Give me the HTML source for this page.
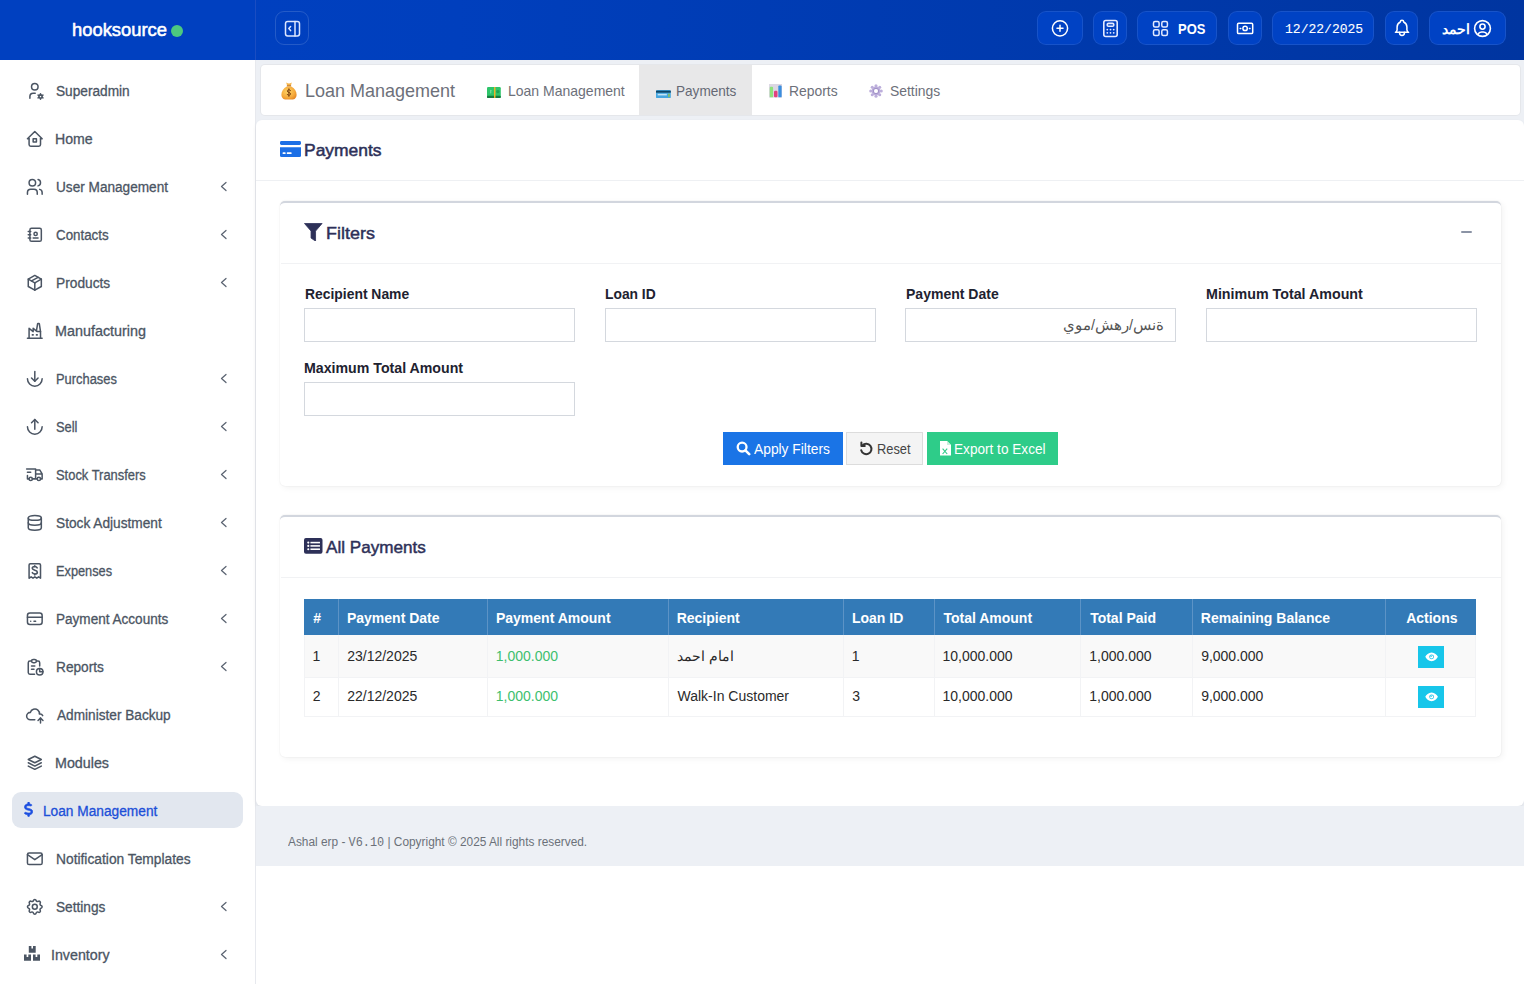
<!DOCTYPE html>
<html><head><meta charset="utf-8"><style>
*{box-sizing:border-box;margin:0;padding:0}
html,body{width:1524px;height:984px;overflow:hidden;background:#fff;font-family:"Liberation Sans",sans-serif}
svg{display:block;position:absolute}
.t{position:absolute;white-space:nowrap;line-height:1;transform-origin:0 0}
.r{position:absolute}
.hb{position:absolute;top:11px;height:34px;border-radius:9px;background:#0042c4;border:1px solid rgba(255,255,255,0.09)}
</style></head><body>
<div class="r" style="left:256px;top:60px;width:1268px;height:806px;background:#edf0f5"></div>
<div class="r" style="left:0;top:0;width:1524px;height:60px;background:linear-gradient(90deg,#0041c2 0%,#003fbd 30%,#003cb4 50%,#0035a0 100%)"></div>
<div class="r" style="left:0;top:0;width:255px;height:60px;background:#0040c0"></div>
<div class="r" style="left:255px;top:0;width:1px;height:60px;background:#1a4dc2"></div>
<div class="t" style="left:72.20px;top:21.25px;font-size:18.6px;color:#fff;-webkit-text-stroke:0.55px #fff;transform:scaleX(0.9873);">hooksource</div>
<div class="r" style="left:171px;top:24.8px;width:12px;height:12px;border-radius:50%;background:#4cc97f"></div>
<div class="hb" style="left:275px;width:34px;background:transparent;border-color:rgba(255,255,255,0.14)"></div>
<svg style="left:284px;top:20px" width="17" height="17" viewBox="0 0 17 17" fill="none" stroke="#dde6ff" stroke-width="1.5" stroke-linecap="round" stroke-linejoin="round"><rect x="1.5" y="1.5" width="14" height="14.5" rx="2.2"/><path d="M11 1.5v14.5"/><path d="M6.6 6.6L4.8 8.6l1.8 2"/></svg>
<div class="hb" style="left:1037px;width:46px"></div>
<svg style="left:1051px;top:19px" width="18" height="18" viewBox="0 0 18 18" fill="none" stroke="#fff" stroke-width="1.5" stroke-linecap="round"><circle cx="9" cy="9.3" r="7.6"/><path d="M9 6.3v6M6 9.3h6"/></svg>
<div class="hb" style="left:1093px;width:34px"></div>
<svg style="left:1102px;top:19px" width="17" height="19" viewBox="0 0 17 19" fill="none" stroke="#e3eaff" stroke-width="1.6" stroke-linecap="round"><rect x="1.8" y="1.5" width="13.4" height="16" rx="2"/><rect x="5.2" y="4.4" width="6.6" height="2.8" rx="1.3"/><path d="M5.3 10.6h.01M8.5 10.6h.01M11.7 10.6h.01M5.3 13.8h.01M8.5 13.8h.01M11.7 13.8h.01" stroke-width="1.8"/></svg>
<div class="hb" style="left:1137px;width:80px"></div>
<svg style="left:1152px;top:20px" width="17" height="17" viewBox="0 0 17 17" fill="none" stroke="#e3eaff" stroke-width="1.5"><rect x="1.5" y="1.5" width="5.6" height="5.6" rx="1.5"/><rect x="9.8" y="1.5" width="5.6" height="5.6" rx="1.5"/><rect x="1.5" y="9.8" width="5.6" height="5.6" rx="1.5"/><rect x="9.8" y="9.8" width="5.6" height="5.6" rx="1.5"/></svg>
<div class="t" style="left:1178.13px;top:21.72px;font-size:14.5px;color:#fff;font-weight:bold;transform:scaleX(0.8939);">POS</div>
<div class="hb" style="left:1228px;width:34px"></div>
<svg style="left:1236px;top:22px" width="18" height="13" viewBox="0 0 18 13" fill="none" stroke="#fff" stroke-width="1.5" stroke-linecap="round"><rect x="1.5" y="1.2" width="15.2" height="10.4" rx="1.2"/><circle cx="9.1" cy="6.4" r="2.2"/><path d="M4.2 6.4h.6M13.4 6.4h.6"/></svg>
<div class="hb" style="left:1272px;width:102px"></div>
<div class="t" style="left:1284.61px;top:22.55px;font-size:13.5px;color:#fff;-webkit-text-stroke:0.1px #fff;font-family:'Liberation Mono',monospace;transform:scaleX(0.9649);">12/22/2025</div>
<div class="hb" style="left:1385px;width:33px"></div>
<svg style="left:1393px;top:19px" width="18" height="19" viewBox="0 0 18 19" fill="none" stroke="#fff" stroke-width="1.5" stroke-linecap="round" stroke-linejoin="round"><path d="M7.3 3a1.7 1.7 0 0 1 3.4 0a5.6 5.6 0 0 1 3.2 4.9v2.9a3.2 3.2 0 0 0 1.7 2.5h-13.2a3.2 3.2 0 0 0 1.7 -2.5v-2.9a5.6 5.6 0 0 1 3.2 -4.9"/><path d="M6.6 13.3v.7a2.4 2.4 0 0 0 4.8 0v-.7"/></svg>
<div class="hb" style="left:1429px;width:77px"></div>
<div class="t" style="left:1442px;top:21.5px;font-size:13.5px;line-height:16px;color:#fff;font-weight:bold">احمد</div>
<svg style="left:1473px;top:19px" width="19" height="19" viewBox="0 0 19 19" fill="none" stroke="#fff" stroke-width="1.6" stroke-linecap="round"><circle cx="9.5" cy="9.5" r="7.9"/><circle cx="9.5" cy="7.6" r="2.6"/><path d="M4.9 15.4a4.3 4.3 0 0 1 3.7 -2.4h1.8a4.3 4.3 0 0 1 3.7 2.4"/></svg>
<div class="r" style="left:0;top:60px;width:256px;height:924px;background:#fff"></div>
<div class="r" style="left:255px;top:60px;width:1px;height:924px;background:#e7e9ee"></div>
<svg style="left:25.2px;top:81.1px" width="19.6" height="19.6" viewBox="0 0 24 24" fill="none" stroke="#4b5563" stroke-width="1.85" stroke-linecap="round" stroke-linejoin="round"><path d="M8 7a4 4 0 1 0 8 0a4 4 0 0 0 -8 0"/><path d="M6 21v-2a4 4 0 0 1 4 -4h2.5"/><path d="M17.001 19a2 2 0 1 0 4 0a2 2 0 1 0 -4 0"/><path d="M19.001 15.5v1.5"/><path d="M19.001 21v1.5"/><path d="M22.032 17.25l-1.299 .75"/><path d="M17.27 20l-1.3 .75"/><path d="M15.97 17.25l1.3 .75"/><path d="M20.733 20l1.3 .75"/></svg>
<div class="t" style="left:56.03px;top:83.94px;font-size:14px;color:#4b5563;-webkit-text-stroke:0.3px #4b5563;transform:scaleX(0.9764);">Superadmin</div>
<svg style="left:25.2px;top:129.1px" width="19.6" height="19.6" viewBox="0 0 24 24" fill="none" stroke="#4b5563" stroke-width="1.85" stroke-linecap="round" stroke-linejoin="round"><path d="M5 12l-2 0l9 -9l9 9l-2 0"/><path d="M5 12v7a2 2 0 0 0 2 2h10a2 2 0 0 0 2 -2v-7"/><path d="M10 12h4v4h-4z"/></svg>
<div class="t" style="left:55.49px;top:131.94px;font-size:14px;color:#4b5563;-webkit-text-stroke:0.3px #4b5563;transform:scaleX(1.0092);">Home</div>
<svg style="left:25.2px;top:177.1px" width="19.6" height="19.6" viewBox="0 0 24 24" fill="none" stroke="#4b5563" stroke-width="1.85" stroke-linecap="round" stroke-linejoin="round"><path d="M5 7a4 4 0 1 0 8 0a4 4 0 1 0 -8 0"/><path d="M3 21v-2a4 4 0 0 1 4 -4h4a4 4 0 0 1 4 4v2"/><path d="M16 3.13a4 4 0 0 1 0 7.75"/><path d="M21 21v-2a4 4 0 0 0 -3 -3.85"/></svg>
<div class="t" style="left:55.60px;top:179.94px;font-size:14px;color:#4b5563;-webkit-text-stroke:0.3px #4b5563;transform:scaleX(0.9730);">User Management</div>
<svg style="left:220px;top:180.8px" width="8" height="11" viewBox="0 0 8 11" fill="none" stroke="#5b6472" stroke-width="1.25" stroke-linecap="round" stroke-linejoin="round"><path d="M6 1.5L1.5 5.5L6 9.5"/></svg>
<svg style="left:25.2px;top:225.1px" width="19.6" height="19.6" viewBox="0 0 24 24" fill="none" stroke="#4b5563" stroke-width="1.85" stroke-linecap="round" stroke-linejoin="round"><path d="M20 6v12a2 2 0 0 1 -2 2h-10a2 2 0 0 1 -2 -2v-12a2 2 0 0 1 2 -2h10a2 2 0 0 1 2 2z"/><path d="M10 16h6"/><path d="M11 11a2 2 0 1 0 4 0a2 2 0 1 0 -4 0"/><path d="M4 8h3"/><path d="M4 12h3"/><path d="M4 16h3"/></svg>
<div class="t" style="left:55.97px;top:227.94px;font-size:14px;color:#4b5563;-webkit-text-stroke:0.3px #4b5563;transform:scaleX(0.9532);">Contacts</div>
<svg style="left:220px;top:228.8px" width="8" height="11" viewBox="0 0 8 11" fill="none" stroke="#5b6472" stroke-width="1.25" stroke-linecap="round" stroke-linejoin="round"><path d="M6 1.5L1.5 5.5L6 9.5"/></svg>
<svg style="left:25.2px;top:273.1px" width="19.6" height="19.6" viewBox="0 0 24 24" fill="none" stroke="#4b5563" stroke-width="1.85" stroke-linecap="round" stroke-linejoin="round"><path d="M12 3l8 4.5l0 9l-8 4.5l-8 -4.5l0 -9l8 -4.5"/><path d="M12 12l8 -4.5"/><path d="M12 12l0 9"/><path d="M12 12l-8 -4.5"/><path d="M16 5.25l-8 4.5"/></svg>
<div class="t" style="left:55.52px;top:275.94px;font-size:14px;color:#4b5563;-webkit-text-stroke:0.3px #4b5563;transform:scaleX(0.9815);">Products</div>
<svg style="left:220px;top:276.8px" width="8" height="11" viewBox="0 0 8 11" fill="none" stroke="#5b6472" stroke-width="1.25" stroke-linecap="round" stroke-linejoin="round"><path d="M6 1.5L1.5 5.5L6 9.5"/></svg>
<svg style="left:25.2px;top:321.1px" width="19.6" height="19.6" viewBox="0 0 24 24" fill="none" stroke="#4b5563" stroke-width="1.85" stroke-linecap="round" stroke-linejoin="round"><path d="M3 21h18"/><path d="M5 21v-12l5 4v-4l5 4h4"/><path d="M19 21v-8l-1.436 -9.574a.5 .5 0 0 0 -.495 -.426h-1.145a.5 .5 0 0 0 -.494 .418l-1.43 8.582"/><path d="M9 17h1"/><path d="M14 17h1"/></svg>
<div class="t" style="left:55.47px;top:323.94px;font-size:14px;color:#4b5563;-webkit-text-stroke:0.3px #4b5563;transform:scaleX(1.0258);">Manufacturing</div>
<svg style="left:25.2px;top:369.1px" width="19.6" height="19.6" viewBox="0 0 24 24" fill="none" stroke="#4b5563" stroke-width="1.85" stroke-linecap="round" stroke-linejoin="round"><path d="M12 3v12"/><path d="M16 11l-4 4l-4 -4"/><path d="M3 12a9 9 0 0 0 18 0"/></svg>
<div class="t" style="left:55.59px;top:371.94px;font-size:14px;color:#4b5563;-webkit-text-stroke:0.3px #4b5563;transform:scaleX(0.9211);">Purchases</div>
<svg style="left:220px;top:372.8px" width="8" height="11" viewBox="0 0 8 11" fill="none" stroke="#5b6472" stroke-width="1.25" stroke-linecap="round" stroke-linejoin="round"><path d="M6 1.5L1.5 5.5L6 9.5"/></svg>
<svg style="left:25.2px;top:417.1px" width="19.6" height="19.6" viewBox="0 0 24 24" fill="none" stroke="#4b5563" stroke-width="1.85" stroke-linecap="round" stroke-linejoin="round"><path d="M12 15v-12"/><path d="M16 7l-4 -4l-4 4"/><path d="M3 12a9 9 0 0 0 18 0"/></svg>
<div class="t" style="left:56.07px;top:419.94px;font-size:14px;color:#4b5563;-webkit-text-stroke:0.3px #4b5563;transform:scaleX(0.9186);">Sell</div>
<svg style="left:220px;top:420.8px" width="8" height="11" viewBox="0 0 8 11" fill="none" stroke="#5b6472" stroke-width="1.25" stroke-linecap="round" stroke-linejoin="round"><path d="M6 1.5L1.5 5.5L6 9.5"/></svg>
<svg style="left:25.2px;top:465.1px" width="19.6" height="19.6" viewBox="0 0 24 24" fill="none" stroke="#4b5563" stroke-width="1.85" stroke-linecap="round" stroke-linejoin="round"><path d="M5 17a2 2 0 1 0 4 0a2 2 0 1 0 -4 0"/><path d="M15 17a2 2 0 1 0 4 0a2 2 0 1 0 -4 0"/><path d="M5 17h-2v-4m-1 -8h11v12m-4 0h6m4 0h2v-6h-8m0 -5h5l3 5"/><path d="M3 9l4 0"/></svg>
<div class="t" style="left:56.06px;top:467.94px;font-size:14px;color:#4b5563;-webkit-text-stroke:0.3px #4b5563;transform:scaleX(0.9227);">Stock Transfers</div>
<svg style="left:220px;top:468.8px" width="8" height="11" viewBox="0 0 8 11" fill="none" stroke="#5b6472" stroke-width="1.25" stroke-linecap="round" stroke-linejoin="round"><path d="M6 1.5L1.5 5.5L6 9.5"/></svg>
<svg style="left:25.2px;top:513.1px" width="19.6" height="19.6" viewBox="0 0 24 24" fill="none" stroke="#4b5563" stroke-width="1.85" stroke-linecap="round" stroke-linejoin="round"><path d="M4 6a8 3 0 1 0 16 0a8 3 0 1 0 -16 0"/><path d="M4 6v6a8 3 0 0 0 16 0v-6"/><path d="M4 12v6a8 3 0 0 0 16 0v-6"/></svg>
<div class="t" style="left:56.03px;top:515.94px;font-size:14px;color:#4b5563;-webkit-text-stroke:0.3px #4b5563;transform:scaleX(0.9778);">Stock Adjustment</div>
<svg style="left:220px;top:516.8px" width="8" height="11" viewBox="0 0 8 11" fill="none" stroke="#5b6472" stroke-width="1.25" stroke-linecap="round" stroke-linejoin="round"><path d="M6 1.5L1.5 5.5L6 9.5"/></svg>
<svg style="left:25.2px;top:561.1px" width="19.6" height="19.6" viewBox="0 0 24 24" fill="none" stroke="#4b5563" stroke-width="1.85" stroke-linecap="round" stroke-linejoin="round"><path d="M5 21v-16a1.5 1.5 0 0 1 1.5 -1.5h11a1.5 1.5 0 0 1 1.5 1.5v16l-2.3 -1.6l-2.3 1.6l-2.3 -1.6l-2.3 1.6l-2.3 -1.6l-2.3 1.6"/><path d="M14.9 8.4c-.5 -1 -1.6 -1.6 -2.9 -1.6c-1.8 0 -3.1 .9 -3.1 2.2c0 3 6.2 1.7 6.2 4.7c0 1.3 -1.4 2.2 -3.1 2.2c-1.4 0 -2.5 -.6 -3 -1.6" stroke-width="2"/><path d="M12 5.8v1.2M12 15.9v1.2" stroke-width="1.8"/></svg>
<div class="t" style="left:55.60px;top:563.94px;font-size:14px;color:#4b5563;-webkit-text-stroke:0.3px #4b5563;transform:scaleX(0.9126);">Expenses</div>
<svg style="left:220px;top:564.8px" width="8" height="11" viewBox="0 0 8 11" fill="none" stroke="#5b6472" stroke-width="1.25" stroke-linecap="round" stroke-linejoin="round"><path d="M6 1.5L1.5 5.5L6 9.5"/></svg>
<svg style="left:25.2px;top:609.1px" width="19.6" height="19.6" viewBox="0 0 24 24" fill="none" stroke="#4b5563" stroke-width="1.85" stroke-linecap="round" stroke-linejoin="round"><path d="M3 8a3 3 0 0 1 3 -3h12a3 3 0 0 1 3 3v8a3 3 0 0 1 -3 3h-12a3 3 0 0 1 -3 -3z"/><path d="M3 10l18 0"/><path d="M7 15l.01 0"/><path d="M11 15l2 0"/></svg>
<div class="t" style="left:55.54px;top:611.94px;font-size:14px;color:#4b5563;-webkit-text-stroke:0.3px #4b5563;transform:scaleX(0.9681);">Payment Accounts</div>
<svg style="left:220px;top:612.8px" width="8" height="11" viewBox="0 0 8 11" fill="none" stroke="#5b6472" stroke-width="1.25" stroke-linecap="round" stroke-linejoin="round"><path d="M6 1.5L1.5 5.5L6 9.5"/></svg>
<svg style="left:25.2px;top:657.1px" width="19.6" height="19.6" viewBox="0 0 24 24" fill="none" stroke="#4b5563" stroke-width="1.85" stroke-linecap="round" stroke-linejoin="round"><path d="M8 5h-2a2 2 0 0 0 -2 2v12a2 2 0 0 0 2 2h5.697"/><path d="M18 14v4h4"/><path d="M18 11v-4a2 2 0 0 0 -2 -2h-2"/><path d="M8 5a2 2 0 0 1 2 -2h2a2 2 0 0 1 2 2v0a2 2 0 0 1 -2 2h-2a2 2 0 0 1 -2 -2z"/><path d="M14 18a4 4 0 1 0 8 0a4 4 0 1 0 -8 0"/><path d="M8 11h4"/><path d="M8 15h3"/></svg>
<div class="t" style="left:55.53px;top:659.94px;font-size:14px;color:#4b5563;-webkit-text-stroke:0.3px #4b5563;transform:scaleX(0.9775);">Reports</div>
<svg style="left:220px;top:660.8px" width="8" height="11" viewBox="0 0 8 11" fill="none" stroke="#5b6472" stroke-width="1.25" stroke-linecap="round" stroke-linejoin="round"><path d="M6 1.5L1.5 5.5L6 9.5"/></svg>
<svg style="left:25.2px;top:705.1px" width="19.6" height="19.6" viewBox="0 0 24 24" fill="none" stroke="#4b5563" stroke-width="1.85" stroke-linecap="round" stroke-linejoin="round"><path d="M12 18.004h-5.343c-2.572 -.004 -4.657 -2.011 -4.657 -4.487c0 -2.475 2.085 -4.482 4.657 -4.482c.393 -1.762 1.794 -3.2 3.675 -3.773c1.88 -.572 3.956 -.193 5.444 1c1.488 1.19 2.162 3.007 1.77 4.769h.99c1.38 0 2.57 .811 3.128 1.986"/><path d="M19 22v-6"/><path d="M22 19l-3 -3l-3 3"/></svg>
<div class="t" style="left:56.62px;top:707.94px;font-size:14px;color:#4b5563;-webkit-text-stroke:0.3px #4b5563;transform:scaleX(0.9741);">Administer Backup</div>
<svg style="left:25.2px;top:753.1px" width="19.6" height="19.6" viewBox="0 0 24 24" fill="none" stroke="#4b5563" stroke-width="1.85" stroke-linecap="round" stroke-linejoin="round"><path d="M12 4l-8 4l8 4l8 -4l-8 -4"/><path d="M4 12l8 4l8 -4"/><path d="M4 16l8 4l8 -4"/></svg>
<div class="t" style="left:55.48px;top:755.94px;font-size:14px;color:#4b5563;-webkit-text-stroke:0.3px #4b5563;transform:scaleX(1.0202);">Modules</div>
<div class="r" style="left:12px;top:792px;width:231px;height:36px;background:#e2e7ef;border-radius:9px"></div>
<svg style="left:23.8px;top:802px" width="9.2" height="14.7" viewBox="0 0 320 512"><path fill="#1c4fe0" stroke="#1c4fe0" stroke-width="22" d="M160 0c17.7 0 32 14.3 32 32v35.7c1.6 .2 3.1 .4 4.7 .7c.4 .1 .7 .1 1.1 .2l48 8.8c17.4 3.2 28.9 19.9 25.7 37.2s-19.9 28.9-37.2 25.7l-47.5-8.7c-31.3-4.6-58.9-1.5-78.3 6.2s-27.2 18.3-29 28.1c-2 10.7-.5 16.7 1.2 20.4c1.8 3.9 5.5 8.3 12.8 13.2c16.3 10.7 41.3 17.7 73.7 26.3l2.9 .8c28.6 7.6 63.6 16.8 89.6 33.8c14.2 9.300 27.6 21.9 35.9 39.5c8.5 17.9 10.3 37.9 6.4 59.2c-6.9 38-33.1 63.4-65.6 76.7c-13.7 5.6-28.600 9.2-44.4 11V480c0 17.7-14.3 32-32 32s-32-14.3-32-32V445.1c-.4-.1-.9-.1-1.3-.2l-.2 0 0 0c-24.4-3.8-64.5-14.3-91.5-26.3c-16.1-7.2-23.4-26.1-16.2-42.2s26.1-23.4 42.2-16.2c20.9 9.3 55.3 18.5 75.2 21.6c31.9 4.7 58.2 2 76-5.3c16.9-6.9 24.6-16.9 26.8-28.9c1.9-10.6 .4-16.7-1.3-20.4c-1.9-4-5.6-8.4-13-13.3c-16.4-10.7-41.5-17.7-74-26.3l-2.8-.7 0 0C119.4 279.3 84.4 270 58.4 253c-14.2-9.3-27.5-22-35.8-39.600c-8.4-17.9-10.1-37.9-6.1-59.2C23.7 116 52.3 91.2 84.8 78.3c13.3-5.3 27.9-8.9 43.2-11V32c0-17.7 14.3-32 32-32z"/></svg>
<div class="t" style="left:43.13px;top:803.94px;font-size:14px;color:#1c4fd8;-webkit-text-stroke:0.3px #1c4fd8;transform:scaleX(0.9792);">Loan Management</div>
<svg style="left:25.2px;top:849.1px" width="19.6" height="19.6" viewBox="0 0 24 24" fill="none" stroke="#4b5563" stroke-width="1.85" stroke-linecap="round" stroke-linejoin="round"><path d="M3 7a2 2 0 0 1 2 -2h14a2 2 0 0 1 2 2v10a2 2 0 0 1 -2 2h-14a2 2 0 0 1 -2 -2v-10z"/><path d="M3 7l9 6l9 -6"/></svg>
<div class="t" style="left:55.52px;top:851.94px;font-size:14px;color:#4b5563;-webkit-text-stroke:0.3px #4b5563;transform:scaleX(0.9850);">Notification Templates</div>
<svg style="left:25.2px;top:897.1px" width="19.6" height="19.6" viewBox="0 0 24 24" fill="none" stroke="#4b5563" stroke-width="1.85" stroke-linecap="round" stroke-linejoin="round"><path d="M10.325 4.317c.426 -1.756 2.924 -1.756 3.35 0a1.724 1.724 0 0 0 2.573 1.066c1.543 -.94 3.31 .826 2.37 2.37a1.724 1.724 0 0 0 1.065 2.572c1.756 .426 1.756 2.924 0 3.35a1.724 1.724 0 0 0 -1.066 2.573c.94 1.543 -.826 3.31 -2.37 2.37a1.724 1.724 0 0 0 -2.572 1.065c-.426 1.756 -2.924 1.756 -3.35 0a1.724 1.724 0 0 0 -2.573 -1.066c-1.543 .94 -3.31 -.826 -2.37 -2.37a1.724 1.724 0 0 0 -1.065 -2.572c-1.756 -.426 -1.756 -2.924 0 -3.35a1.724 1.724 0 0 0 1.066 -2.573c-.94 -1.543 .826 -3.31 2.37 -2.37c1 .608 2.296 .07 2.572 -1.065z"/><path d="M9 12a3 3 0 1 0 6 0a3 3 0 0 0 -6 0"/></svg>
<div class="t" style="left:56.03px;top:899.94px;font-size:14px;color:#4b5563;-webkit-text-stroke:0.3px #4b5563;transform:scaleX(0.9769);">Settings</div>
<svg style="left:220px;top:900.8px" width="8" height="11" viewBox="0 0 8 11" fill="none" stroke="#5b6472" stroke-width="1.25" stroke-linecap="round" stroke-linejoin="round"><path d="M6 1.5L1.5 5.5L6 9.5"/></svg>
<svg style="left:24px;top:946px" width="16" height="15" viewBox="0 0 16 15"><path fill="#4b5563" d="M4.8 0h2.6v2.6h1.6V0h2.7v6.8H4.8z"/><path fill="#4b5563" d="M0 8.5h2.6v2.5h1.7V8.5h2.7v6.3H0z"/><path fill="#4b5563" d="M9 8.5h2.6v2.5h1.7V8.5h2.7v6.3H9z"/></svg>
<div class="t" style="left:50.94px;top:947.94px;font-size:14px;color:#4b5563;-webkit-text-stroke:0.3px #4b5563;transform:scaleX(1.0166);">Inventory</div>
<svg style="left:220px;top:948.8px" width="8" height="11" viewBox="0 0 8 11" fill="none" stroke="#5b6472" stroke-width="1.25" stroke-linecap="round" stroke-linejoin="round"><path d="M6 1.5L1.5 5.5L6 9.5"/></svg>
<div class="r" style="left:261px;top:65px;width:1259px;height:50px;background:#fff;border-radius:4px;box-shadow:0 0 0 1px #e5e7eb"></div>
<div class="r" style="left:639px;top:65px;width:112.5px;height:50px;background:#e8e8e9"></div>
<svg style="left:280.5px;top:81.5px" width="16" height="18" viewBox="0 0 16 18"><defs><radialGradient id="bag" cx="0.42" cy="0.4" r="0.75"><stop offset="0" stop-color="#ffd466"/><stop offset="0.6" stop-color="#f5a93a"/><stop offset="1" stop-color="#e07b1c"/></radialGradient></defs><path d="M5.2 0.6c1 .5 1.8 .9 2.8 .9s1.8-.4 2.8-.9l-0.9 3h-3.8z" fill="#f6b346"/><path d="M5.9 3.3h4.2v1.2h-4.2z" fill="#b86a18"/><path d="M5.8 4.4c-3.4 1.7-5.4 5-5.4 8.3c0 3 2.1 4.9 4.6 4.9h6c2.5 0 4.6-1.9 4.6-4.9c0-3.3-2-6.6-5.4-8.3z" fill="url(#bag)"/><path d="M9.6 8.6c-.4-.5-1-.8-1.7-.8c-.9 0-1.6 .5-1.6 1.3c0 1.7 3.3 1.1 3.3 2.8c0 .8-.7 1.3-1.7 1.3c-.8 0-1.5-.4-1.8-.9M7.9 6.8v7.6" fill="none" stroke="#7a3e0c" stroke-width="1" stroke-linecap="round"/></svg>
<div class="t" style="left:305.02px;top:81.83px;font-size:18.5px;color:#6d707a;transform:scaleX(0.9723);">Loan Management</div>
<svg style="left:487.4px;top:87px" width="13.8" height="11" viewBox="0 0 14 11"><rect x="0" y="0" width="14" height="11" rx="1.2" fill="#2ec56a"/><rect x="0" y="8.9" width="14" height="2.1" rx="0.8" fill="#167a3e"/><rect x="7.1" y="0" width="1.5" height="11" fill="#f0b328"/><circle cx="11" cy="4.6" r="1.7" fill="#1ea455"/><rect x="3.3" y="2.6" width="1" height="4" rx="0.5" fill="#7ee3a6"/></svg>
<div class="t" style="left:507.75px;top:83.72px;font-size:14.5px;color:#6d707a;transform:scaleX(0.9655);">Loan Management</div>
<svg style="left:656.2px;top:89.6px" width="14.8" height="8.4" viewBox="0 0 15 8.5"><rect x="0" y="0" width="15" height="8.5" rx="1.5" fill="#45a6e0"/><rect x="0" y="0.7" width="15" height="2" fill="#0e4566"/><rect x="1.7" y="3.9" width="9.3" height="1.6" fill="#c4e4f6"/><rect x="12.2" y="3.7" width="1.8" height="3.6" fill="#86c06a"/></svg>
<div class="t" style="left:676.29px;top:83.72px;font-size:14.5px;color:#656874;transform:scaleX(0.9369);">Payments</div>
<svg style="left:769.3px;top:84.2px" width="13.2" height="13.6" viewBox="0 0 13 13.5"><rect x="0" y="0" width="13" height="13.5" fill="#dcd7e3"/><rect x="0.7" y="2.8" width="3.3" height="10.4" rx="0.9" fill="#8ee27c"/><rect x="4.9" y="6.8" width="3.5" height="6.4" rx="1.2" fill="#e0407e"/><rect x="9.2" y="1.5" width="3.3" height="11.7" rx="0.9" fill="#3b8ede"/></svg>
<div class="t" style="left:788.86px;top:83.72px;font-size:14.5px;color:#6d707a;transform:scaleX(0.9581);">Reports</div>
<svg style="left:869.3px;top:83.8px" width="14" height="14" viewBox="0 0 24 24"><g fill="#bcaedb"><circle cx="12" cy="12" r="7.6"/><circle cx="12" cy="2.9" r="2.6"/><circle cx="12" cy="21.1" r="2.6"/><circle cx="2.9" cy="12" r="2.6"/><circle cx="21.1" cy="12" r="2.6"/><circle cx="5.6" cy="5.6" r="2.6"/><circle cx="18.4" cy="5.6" r="2.6"/><circle cx="5.6" cy="18.4" r="2.6"/><circle cx="18.4" cy="18.4" r="2.6"/></g><circle cx="12" cy="12" r="4.6" fill="none" stroke="#a090c6" stroke-width="1.6"/><circle cx="12" cy="12" r="3.4" fill="#fff"/></svg>
<div class="t" style="left:889.97px;top:83.72px;font-size:14.5px;color:#6d707a;transform:scaleX(0.9588);">Settings</div>
<div class="r" style="left:256px;top:120px;width:1268px;height:686px;background:#fff;border-radius:6px;box-shadow:0 2px 4px rgba(0,0,0,0.07)"></div>
<svg style="left:280px;top:141px" width="21" height="16" viewBox="0 0 21 16"><rect x="0" y="0" width="21" height="4" rx="1.4" fill="#1c6fe6"/><path d="M0 6.2h21v8.3a1.5 1.5 0 0 1-1.5 1.5h-18a1.5 1.5 0 0 1-1.5-1.5z" fill="#1c6fe6"/><rect x="2.6" y="11.2" width="3" height="1.9" rx="0.6" fill="#fff"/><rect x="6.8" y="11.2" width="4.8" height="1.9" rx="0.6" fill="#fff"/></svg>
<div class="t" style="left:303.72px;top:141.50px;font-size:17px;color:#2d3058;-webkit-text-stroke:0.5px #2d3058;transform:scaleX(1.0261);">Payments</div>
<div class="r" style="left:256px;top:180px;width:1268px;height:1px;background:#eef0f3"></div>
<div class="r" style="left:280px;top:201px;width:1221px;height:285px;background:#fff;border-top:2.5px solid #d2d6de;border-radius:5px;box-shadow:2px 2px 6px rgba(0,0,0,0.05),0 0 1.5px rgba(0,0,0,0.10)"></div>
<svg style="left:304.3px;top:222.9px" width="18.6" height="18.6" viewBox="0 0 19 19"><path d="M0.5 0.5h18l-6.7 7.8v10.2l-4.6-3.1v-7.1z" fill="#2d3058" stroke="#2d3058" stroke-width="0.8" stroke-linejoin="round"/></svg>
<div class="t" style="left:325.65px;top:224.50px;font-size:17px;color:#2d3058;-webkit-text-stroke:0.45px #2d3058;transform:scaleX(1.0561);">Filters</div>
<div class="r" style="left:1461px;top:231.3px;width:10.5px;height:2px;border-radius:1px;background:#8b93a5"></div>
<div class="r" style="left:281px;top:263px;width:1220px;height:1px;background:#f1f2f4"></div>
<div class="t" style="left:304.67px;top:287.06px;font-size:14.8px;color:#1e2230;font-weight:bold;transform:scaleX(0.9385);">Recipient Name</div>
<div class="t" style="left:604.97px;top:287.06px;font-size:14.8px;color:#1e2230;font-weight:bold;transform:scaleX(0.9344);">Loan ID</div>
<div class="t" style="left:905.66px;top:287.06px;font-size:14.8px;color:#1e2230;font-weight:bold;transform:scaleX(0.9472);">Payment Date</div>
<div class="t" style="left:1206.15px;top:287.06px;font-size:14.8px;color:#1e2230;font-weight:bold;transform:scaleX(0.9635);">Minimum Total Amount</div>
<div class="t" style="left:304.25px;top:361.06px;font-size:14.8px;color:#1e2230;font-weight:bold;transform:scaleX(0.9576);">Maximum Total Amount</div>
<div class="r" style="left:304px;top:308px;width:271px;height:34px;border:1px solid #d4d8de;background:#fff"></div>
<div class="r" style="left:605px;top:308px;width:271px;height:34px;border:1px solid #d4d8de;background:#fff"></div>
<div class="r" style="left:905px;top:308px;width:271px;height:34px;border:1px solid #d4d8de;background:#fff"></div>
<div class="r" style="left:1206px;top:308px;width:271px;height:34px;border:1px solid #d4d8de;background:#fff"></div>
<div class="r" style="left:304px;top:382px;width:271px;height:34px;border:1px solid #d4d8de;background:#fff"></div>
<div class="t" dir="rtl" style="left:1044px;top:316px;font-size:14.5px;line-height:18px;color:#555;width:120px;text-align:right;letter-spacing:0.25px">ةنس/رهش/موي</div>
<div class="r" style="left:723px;top:432px;width:120px;height:33px;background:#1a74e6"></div>
<svg style="left:735.5px;top:441.2px" width="15" height="15" viewBox="0 0 15 15"><circle cx="6.1" cy="6.1" r="4.4" fill="none" stroke="#fff" stroke-width="2.3"/><path d="M9.4 9.4l3.8 3.8" stroke="#fff" stroke-width="2.6" stroke-linecap="round"/></svg>
<div class="t" style="left:754.37px;top:442.04px;font-size:14px;color:#fff;transform:scaleX(0.9858);">Apply Filters</div>
<div class="r" style="left:846px;top:432px;width:77px;height:33px;background:#f4f4f4;border:1px solid #dcdcdc"></div>
<svg style="left:858.5px;top:441px" width="14" height="15" viewBox="0 0 14 15" fill="none" stroke="#333" stroke-width="2" stroke-linecap="round"><path d="M3.4 4.4A5.2 5.2 0 1 1 2.2 9.2"/><path d="M2.4 1.6v3.4h3.4" stroke-linejoin="round"/></svg>
<div class="t" style="left:876.75px;top:442.04px;font-size:14px;color:#444;transform:scaleX(0.9173);">Reset</div>
<div class="r" style="left:927px;top:432px;width:131px;height:33px;background:#2ecc89"></div>
<svg style="left:940px;top:441.3px" width="11" height="14.4" viewBox="0 0 11 14.4"><path d="M0 0h7l4 4v10.4h-11z" fill="#fff"/><path d="M7 0v4h4" fill="#c9f0dc"/><path d="M2.6 7.6l4.6 5.4M7.2 7.6l-4.6 5.4" stroke="#2ecc89" stroke-width="1.1"/></svg>
<div class="t" style="left:954.28px;top:442.04px;font-size:14px;color:#fff;transform:scaleX(0.9721);">Export to Excel</div>
<div class="r" style="left:280px;top:515px;width:1221px;height:242px;background:#fff;border-top:2.5px solid #d2d6de;border-radius:5px;box-shadow:2px 2px 6px rgba(0,0,0,0.05),0 0 1.5px rgba(0,0,0,0.10)"></div>
<svg style="left:304.2px;top:538.3px" width="18.5" height="15.8" viewBox="0 0 19 16"><rect x="0" y="0" width="19" height="16" rx="2" fill="#2d3058"/><circle cx="4.4" cy="4.6" r="1.1" fill="#fff"/><circle cx="4.4" cy="8" r="1.1" fill="#fff"/><circle cx="4.4" cy="11.4" r="1.1" fill="#fff"/><rect x="6.6" y="3.8" width="9.8" height="1.6" fill="#fff"/><rect x="6.6" y="7.2" width="9.8" height="1.6" fill="#fff"/><rect x="6.6" y="10.6" width="9.8" height="1.6" fill="#fff"/></svg>
<div class="t" style="left:326.39px;top:538.60px;font-size:17px;color:#2d3058;-webkit-text-stroke:0.45px #2d3058;transform:scaleX(1.0071);">All Payments</div>
<div class="r" style="left:281px;top:577px;width:1220px;height:1px;background:#f1f2f4"></div>
<div class="r" style="left:304px;top:599px;width:1172px;height:36px;background:#337ab7"></div>
<div class="r" style="left:304px;top:635px;width:1172px;height:41.5px;background:#f9f9f9"></div>
<div class="r" style="left:304px;top:676.5px;width:1172px;height:1px;background:#f2f3f5"></div>
<div class="r" style="left:304px;top:635px;width:1px;height:81px;background:#f2f3f5"></div>
<div class="r" style="left:1475px;top:635px;width:1px;height:81px;background:#f2f3f5"></div>
<div class="r" style="left:304px;top:715.5px;width:1172px;height:1px;background:#f2f3f5"></div>
<div class="r" style="left:337.9px;top:599px;width:1.2px;height:36px;background:#5c93c6"></div>
<div class="r" style="left:337.9px;top:635px;width:1px;height:81px;background:#f2f3f5"></div>
<div class="r" style="left:486.9px;top:599px;width:1.2px;height:36px;background:#5c93c6"></div>
<div class="r" style="left:486.9px;top:635px;width:1px;height:81px;background:#f2f3f5"></div>
<div class="r" style="left:667.6px;top:599px;width:1.2px;height:36px;background:#5c93c6"></div>
<div class="r" style="left:667.6px;top:635px;width:1px;height:81px;background:#f2f3f5"></div>
<div class="r" style="left:842.9px;top:599px;width:1.2px;height:36px;background:#5c93c6"></div>
<div class="r" style="left:842.9px;top:635px;width:1px;height:81px;background:#f2f3f5"></div>
<div class="r" style="left:933.6px;top:599px;width:1.2px;height:36px;background:#5c93c6"></div>
<div class="r" style="left:933.6px;top:635px;width:1px;height:81px;background:#f2f3f5"></div>
<div class="r" style="left:1080.3px;top:599px;width:1.2px;height:36px;background:#5c93c6"></div>
<div class="r" style="left:1080.3px;top:635px;width:1px;height:81px;background:#f2f3f5"></div>
<div class="r" style="left:1191.8px;top:599px;width:1.2px;height:36px;background:#5c93c6"></div>
<div class="r" style="left:1191.8px;top:635px;width:1px;height:81px;background:#f2f3f5"></div>
<div class="r" style="left:1385.0px;top:599px;width:1.2px;height:36px;background:#5c93c6"></div>
<div class="r" style="left:1385.0px;top:635px;width:1px;height:81px;background:#f2f3f5"></div>
<div class="t" style="left:313.26px;top:611.34px;font-size:14px;color:#fff;font-weight:bold;">#</div>
<div class="t" style="left:346.96px;top:611.34px;font-size:14px;color:#fff;font-weight:bold;">Payment Date</div>
<div class="t" style="left:495.96px;top:611.34px;font-size:14px;color:#fff;font-weight:bold;">Payment Amount</div>
<div class="t" style="left:676.66px;top:611.34px;font-size:14px;color:#fff;font-weight:bold;">Recipient</div>
<div class="t" style="left:851.96px;top:611.34px;font-size:14px;color:#fff;font-weight:bold;">Loan ID</div>
<div class="t" style="left:943.44px;top:611.34px;font-size:14px;color:#fff;font-weight:bold;">Total Amount</div>
<div class="t" style="left:1090.14px;top:611.34px;font-size:14px;color:#fff;font-weight:bold;">Total Paid</div>
<div class="t" style="left:1200.86px;top:611.34px;font-size:14px;color:#fff;font-weight:bold;">Remaining Balance</div>
<div class="t" style="left:1406.15px;top:611.34px;font-size:14px;color:#fff;font-weight:bold;">Actions</div>
<div class="t" style="left:312.43px;top:648.74px;font-size:14px;color:#2a2a2a;">1</div>
<div class="t" style="left:347.20px;top:648.74px;font-size:14px;color:#2a2a2a;">23/12/2025</div>
<div class="t" style="left:495.83px;top:648.74px;font-size:14px;color:#3dbf6e;">1,000.000</div>
<div class="t" style="left:677.1px;top:647.6px;font-size:14px;line-height:17px;color:#2a2a2a">امام احمد</div>
<div class="t" style="left:851.83px;top:648.74px;font-size:14px;color:#2a2a2a;">1</div>
<div class="t" style="left:942.53px;top:648.74px;font-size:14px;color:#2a2a2a;">10,000.000</div>
<div class="t" style="left:1089.23px;top:648.74px;font-size:14px;color:#2a2a2a;">1,000.000</div>
<div class="t" style="left:1201.14px;top:648.74px;font-size:14px;color:#2a2a2a;">9,000.000</div>
<div class="r" style="left:1418px;top:646px;width:26px;height:22px;background:#17c6ea"></div>
<svg style="left:1424.8px;top:652px" width="13.2" height="9.6" viewBox="0 0 14 10"><path d="M7 0.4c3.2 0 5.7 2.5 6.7 4.6c-1 2.1-3.5 4.6-6.7 4.6s-5.7-2.5-6.7-4.6c1-2.1 3.5-4.6 6.7-4.6z" fill="#fff"/><circle cx="7" cy="5" r="2.5" fill="#17c6ea"/><circle cx="7" cy="5" r="1.7" fill="#fff"/><circle cx="6.5" cy="4.5" r="0.8" fill="#17c6ea"/></svg>
<div class="t" style="left:312.80px;top:688.74px;font-size:14px;color:#2a2a2a;">2</div>
<div class="t" style="left:347.20px;top:688.74px;font-size:14px;color:#2a2a2a;">22/12/2025</div>
<div class="t" style="left:495.83px;top:688.74px;font-size:14px;color:#3dbf6e;">1,000.000</div>
<div class="t" style="left:677.54px;top:688.74px;font-size:14px;color:#2a2a2a;">Walk-In Customer</div>
<div class="t" style="left:852.37px;top:688.74px;font-size:14px;color:#2a2a2a;">3</div>
<div class="t" style="left:942.53px;top:688.74px;font-size:14px;color:#2a2a2a;">10,000.000</div>
<div class="t" style="left:1089.23px;top:688.74px;font-size:14px;color:#2a2a2a;">1,000.000</div>
<div class="t" style="left:1201.14px;top:688.74px;font-size:14px;color:#2a2a2a;">9,000.000</div>
<div class="r" style="left:1418px;top:686px;width:26px;height:22px;background:#17c6ea"></div>
<svg style="left:1424.8px;top:692px" width="13.2" height="9.6" viewBox="0 0 14 10"><path d="M7 0.4c3.2 0 5.7 2.5 6.7 4.6c-1 2.1-3.5 4.6-6.7 4.6s-5.7-2.5-6.7-4.6c1-2.1 3.5-4.6 6.7-4.6z" fill="#fff"/><circle cx="7" cy="5" r="2.5" fill="#17c6ea"/><circle cx="7" cy="5" r="1.7" fill="#fff"/><circle cx="6.5" cy="4.5" r="0.8" fill="#17c6ea"/></svg>
<div class="r" style="left:256px;top:806px;width:1268px;height:59px;background:#edf0f5"></div>
<div class="t" style="left:288.4px;top:835.8px;font-size:12px;color:#6b7079;transform:scaleX(0.988)">Ashal erp - <span style="font-family:'Liberation Mono',monospace">V6.10</span> | Copyright © 2025 All rights reserved.</div>
</body></html>
